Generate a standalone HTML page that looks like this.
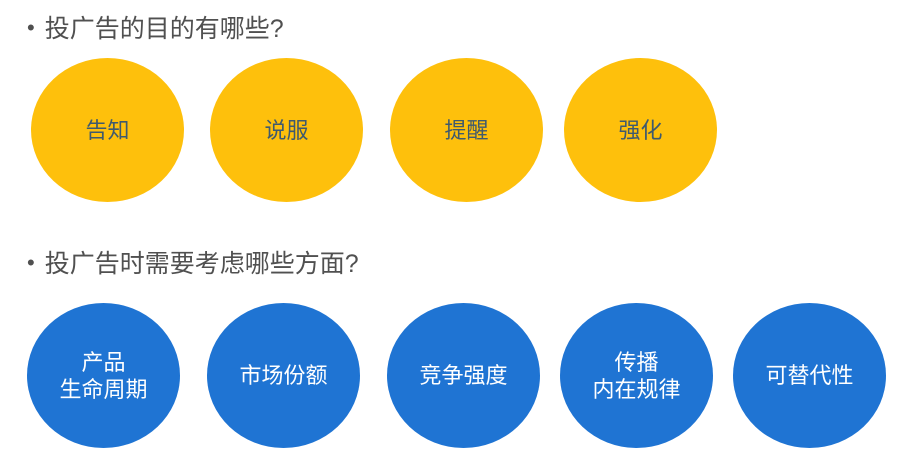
<!DOCTYPE html>
<html><head><meta charset="utf-8"><style>
body{margin:0;width:902px;height:459px;background:#fff;position:relative;overflow:hidden;font-family:"Liberation Sans","Noto Sans CJK SC",sans-serif}
.h{position:absolute;left:27px;font-size:25px;color:#505050;white-space:nowrap}
.h b{font-weight:normal;font-size:22px;margin-right:10px;position:relative;top:-2px}
.c{position:absolute;border-radius:50%;display:flex;align-items:center;justify-content:center;text-align:center;font-size:22px;line-height:27px}
.y{background:#FEC00C;color:#3F5A6E;top:58px;width:153px;height:144px}
.b{background:#1F74D3;color:#fff;top:303px;width:153px;height:145px}
</style></head><body>
<div class="h" style="top:9px"><b>•</b>投广告的目的有哪些?</div>
<div class="c y" style="left:31px">告知</div>
<div class="c y" style="left:210px">说服</div>
<div class="c y" style="left:390px">提醒</div>
<div class="c y" style="left:564px">强化</div>
<div class="h" style="top:244px"><b>•</b>投广告时需要考虑哪些方面?</div>
<div class="c b" style="left:27px">产品<br>生命周期</div>
<div class="c b" style="left:207px">市场份额</div>
<div class="c b" style="left:387px">竞争强度</div>
<div class="c b" style="left:560px">传播<br>内在规律</div>
<div class="c b" style="left:733px">可替代性</div>
</body></html>
